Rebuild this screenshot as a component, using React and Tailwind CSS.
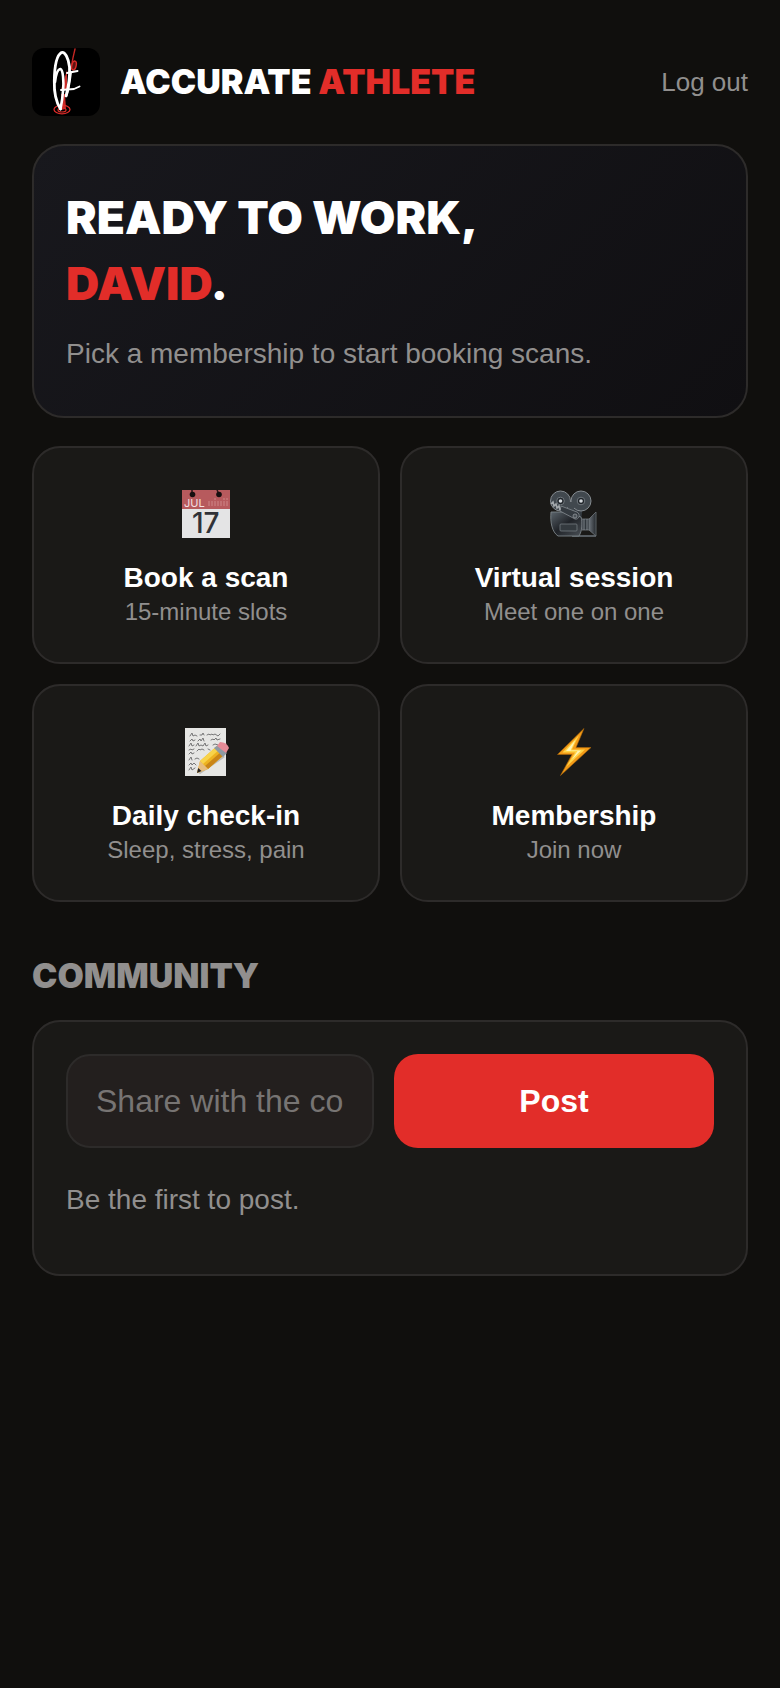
import React, { useState } from 'react';

function Logo() {
  return (
    <svg viewBox="0 0 68 68" className="size-17 shrink-0 rounded-xl bg-black" fill="none" strokeLinecap="round" strokeLinejoin="round" role="img" aria-label="Accurate Athlete logo">
      <path d="M43 1 C42 6 40 12 39.500 20" stroke="#c42623" strokeWidth="1.4" />
      <ellipse cx="42" cy="17.500" rx="2.200" ry="4.500" transform="rotate(12 42 17.500)" fill="#5d1311" stroke="#d92b28" strokeWidth="1.4" />
      <path d="M35 22 L35 42 L29 42 Z" fill="#c92a27" />
      <path d="M29 46 L33 46 L34 61 L29 62 Z" fill="#c92a27" />
      <ellipse cx="30" cy="61.500" rx="8" ry="4.300" stroke="#d92b28" strokeWidth="1.3" />
      <ellipse cx="30" cy="62" rx="4" ry="2" stroke="#d92b28" strokeWidth="1.2" />
      <path d="M28.500 61 C24 54 22 44 22.300 33 C22.500 18 25 7 29.500 4.500 C33 3.500 36.500 10 37.500 19 C38 29 36.500 39 34 48" stroke="#fff" strokeWidth="2.8" />
      <path d="M23 34 C24 26 26 21 28.500 21 C31 22 32 33 31 43 C30.500 51 29.500 56 28.500 61" stroke="#fff" strokeWidth="2.600" />
      <path d="M35 25 L45.500 23" stroke="#fff" strokeWidth="2" />
      <path d="M29 42 L42 41 L47.500 38.500" stroke="#fff" strokeWidth="1.900" />
      <path d="M39 24 C38 32 37 41 34.500 48" stroke="#fff" strokeWidth="2" />
    </svg>
  );
}

function CalendarIcon() {
  return (
    <svg viewBox="0 0 48 48" className="size-12" aria-hidden="true">
      <rect width="48" height="48" fill="#e4e4e5" />
      <rect width="48" height="19" fill="#b75a5d" />
      <path d="M10 0V4M35 0l2 4" stroke="#291717" strokeWidth="1.5" />
      <circle cx="10.5" cy="4.5" r="2.8" fill="#160f0f" />
      <circle cx="37" cy="4.5" r="2.8" fill="#160f0f" />
      <path d="M27 16v-5M30 16v-5M33 16v-5M36 16v-5M39 16v-5M42 16v-5M45 16v-5M33 10V8M42 10V8M45 10V8" stroke="#cf8789" strokeWidth="1" />
      <text fontFamily="Inter, sans-serif">
        <tspan x="2" y="17" fontSize="11" fill="#f4dfe0">JUL</tspan>
        <tspan x="10" y="43" fontSize="28" fontWeight="500" fill="#303238">17</tspan>
      </text>
    </svg>
  );
}

function CameraIcon() {
  return (
    <svg viewBox="0 0 48 48" className="size-12" aria-hidden="true">
      <defs>
        <linearGradient id="camera-body" x1="0" y1="0" x2="1" y2="1">
          <stop offset="0" stopColor="#5b646b" />
          <stop offset="0.5" stopColor="#202328" />
          <stop offset="1" stopColor="#4b5157" />
        </linearGradient>
        <linearGradient id="camera-horn" x1="0" y1="0" x2="1" y2="0">
          <stop offset="0" stopColor="#6b7279" />
          <stop offset="1" stopColor="#24282c" />
        </linearGradient>
      </defs>
      <path d="M22 45h24v2H22z" fill="#555b60" />
      <path d="M7 15h26l-2 16-18-5z" fill="#343a40" />
      <circle cx="10.500" cy="11" r="10" fill="#41484e" stroke="#858b90" strokeWidth="1" />
      <circle cx="31" cy="11" r="10" fill="#41484e" stroke="#858b90" strokeWidth="1" />
      <path d="M18 12h6v10h-6z" fill="#41484e" />
      <circle cx="10.500" cy="11" r="3.800" fill="#20252a" stroke="#6f767c" />
      <circle cx="31" cy="11" r="3.800" fill="#20252a" stroke="#6f767c" />
      <circle cx="10.500" cy="11" r="1.800" fill="#d3d8dc" />
      <circle cx="31" cy="11" r="1.800" fill="#d3d8dc" />
      <path d="M1 22h13l17 5c2 6 1 14-2 19H8C2 42 0 32 1 22z" fill="url(#camera-body)" stroke="#7c8388" strokeWidth="0.9" />
      <path d="M32 29h8v11h-8z" fill="#30363c" stroke="#737a80" strokeWidth="0.8" />
      <path d="M34 29v11M37 29v11" stroke="#92999e" strokeWidth="0.8" />
      <path d="M39 29l7-7v24l-7-6z" fill="url(#camera-horn)" stroke="#6d7379" strokeWidth="0.8" />
      <path d="M11 16l16 6c4 2 2 8-2 7L10 21z" fill="#343a40" stroke="#858b90" strokeWidth="0.8" />
      <circle cx="25" cy="26" r="2" fill="#4b5258" stroke="#90969b" strokeWidth="0.8" />
      <path d="M1 14l2-2 1 4 2-2 1 4 2-2 1 4" stroke="#a4a9ad" strokeWidth="1.600" fill="none" />
      <rect x="10" y="34" width="17" height="7" rx="1" fill="#343a3f" stroke="#747b81" strokeWidth="0.8" />
    </svg>
  );
}

function NoteIcon() {
  return (
    <svg viewBox="0 0 48 48" className="size-12" aria-hidden="true">
      <rect x="3" width="41" height="48" fill="#e6e6e4" />
      <g fill="none" stroke="#6a6a6b" strokeWidth="0.9" strokeLinecap="round">
        <path d="M8 8l2-3 1 3 2-1 2 1M18 7h2l1-2 1 2M25 7l2-1 1 1 2-1 1 1 2-1 3 2 2-2" />
        <path d="M8 13l2-2 1 2 2-1M16 13l2-2 1 2 2-3 1 3M29 12l2-1 1 1 2-2 1 2 3-1" />
        <path d="M7 18l2-3 1 3 2-1M14 18l2-3 1 3 2-1 2 1 2-3 1 3 2-1M31 17l2-1 3 1" />
        <path d="M7 22l2-1 1 1 2-1M15 23l2-2 1 1 2-1 2 1M26 21l2 1" />
        <path d="M7 26l2-2 1 2 2-1M7 32l2-3 1 3M13 31l2-1 2 1" />
        <path d="M7 37l2-2 1 2 2-2 2 2M7 42l2-3 1 3 3-2" />
      </g>
      <path d="M17 45L42 28" stroke="#bcbcba" strokeWidth="3" />
      <path d="M15 45l3-12L35 18l8 8-17 15z" fill="#eeb321" />
      <path d="M18 33L35 18l3 3-17 15z" fill="#f8d34a" />
      <path d="M23 38L40 23l3 3-17 15z" fill="#ca8518" />
      <path d="M15 45l3-12 3 3 2 2 3 3z" fill="#e7bd80" />
      <path d="M15 45l1.200-5 3.300 3z" fill="#242222" />
      <path d="M32 20l4-3 9 8-4 4z" fill="#8e9aa3" />
      <path d="M35 18l3-4q7 0 9 6l-3 5z" fill="#e58b96" />
    </svg>
  );
}

function BoltIcon() {
  return (
    <svg viewBox="0 0 48 48" className="size-12" aria-hidden="true">
      <path d="M34 .5L7.500 26.500H22L10.500 47.500 41 19.500H26z" fill="#f39b18" stroke="#a96408" strokeWidth="0.6" />
      <path d="M29 7L12.500 24.500H25L16 39 35 21.500H22z" fill="#ffd447" />
      <path d="M25.500 12L16 23H27.500L22 31.500 31 22.500H20.500z" fill="#fff4b5" />
    </svg>
  );
}

const tiles = [
  { title: 'Book a scan', text: '15-minute slots', Icon: CalendarIcon },
  { title: 'Virtual session', text: 'Meet one on one', Icon: CameraIcon },
  { title: 'Daily check-in', text: 'Sleep, stress, pain', Icon: NoteIcon },
  { title: 'Membership', text: 'Join now', Icon: BoltIcon },
];

export default function App() {
  const [message, setMessage] = useState('');

  return (
    <div className="min-h-screen bg-[#100f0d] px-8 pt-12 pb-8 font-['Liberation_Sans',Arial,sans-serif] text-white">
      <header className="flex items-center gap-5">
        <Logo />
        <div className="font-['Inter',sans-serif] text-[34px] leading-12 font-black">
          ACCURATE <span className="text-[#e22d29]">ATHLETE</span>
        </div>
        <button className="ml-auto text-[26px] leading-10 text-[#918f8e]">Log out</button>
      </header>

      <main>
        <section className="mt-7 rounded-[32px] border-2 border-[#2d2b2a] bg-linear-135 from-[#18181d] to-[#100f12] px-8 pt-[38px] pb-10">
          <h1 className="font-['Inter',sans-serif] text-[46px] leading-[66px] font-black">
            READY TO WORK,<br />
            <span className="text-[#e22d29]">DAVID</span>.
          </h1>
          <p className="mt-4 text-[28px] leading-11 text-[#918f8e]">Pick a membership to start booking scans.</p>
        </section>

        <div className="mt-7 grid grid-cols-2 gap-5">
          {tiles.map(({ title, text, Icon }) => (
            <button key={title} className="flex h-[218px] flex-col items-center rounded-[28px] border-2 border-[#2d2b2a] bg-[#1a1917] pt-[42px]">
              <Icon />
              <span className="mt-5 text-[28px] leading-10 font-bold">{title}</span>
              <span className="text-2xl leading-7 text-[#918f8e]">{text}</span>
            </button>
          ))}
        </div>

        <h2 className="mt-[50px] font-['Inter',sans-serif] text-[34px] leading-12 font-black text-[#918f8e]">COMMUNITY</h2>
        <section className="mt-5 rounded-[28px] border-2 border-[#2d2b2a] bg-[#1a1917] px-8 pt-8 pb-13">
          <form className="grid grid-cols-[77fr_80fr] gap-5" onSubmit={(e) => e.preventDefault()}>
            <input type="text" aria-label="Share with the community" placeholder="Share with the community" value={message} onChange={(e) => setMessage(e.target.value)} className="h-[94px] w-full min-w-0 rounded-3xl border-2 border-[#2d2b2a] bg-[#231f1e] px-7 text-[32px] placeholder:text-[#777473]" />
            <button className="rounded-3xl bg-[#e22d29] text-[32px] font-bold">Post</button>
          </form>
          <p className="mt-[30px] text-[28px] leading-11 text-[#918f8e]">Be the first to post.</p>
        </section>
      </main>
    </div>
  );
}
